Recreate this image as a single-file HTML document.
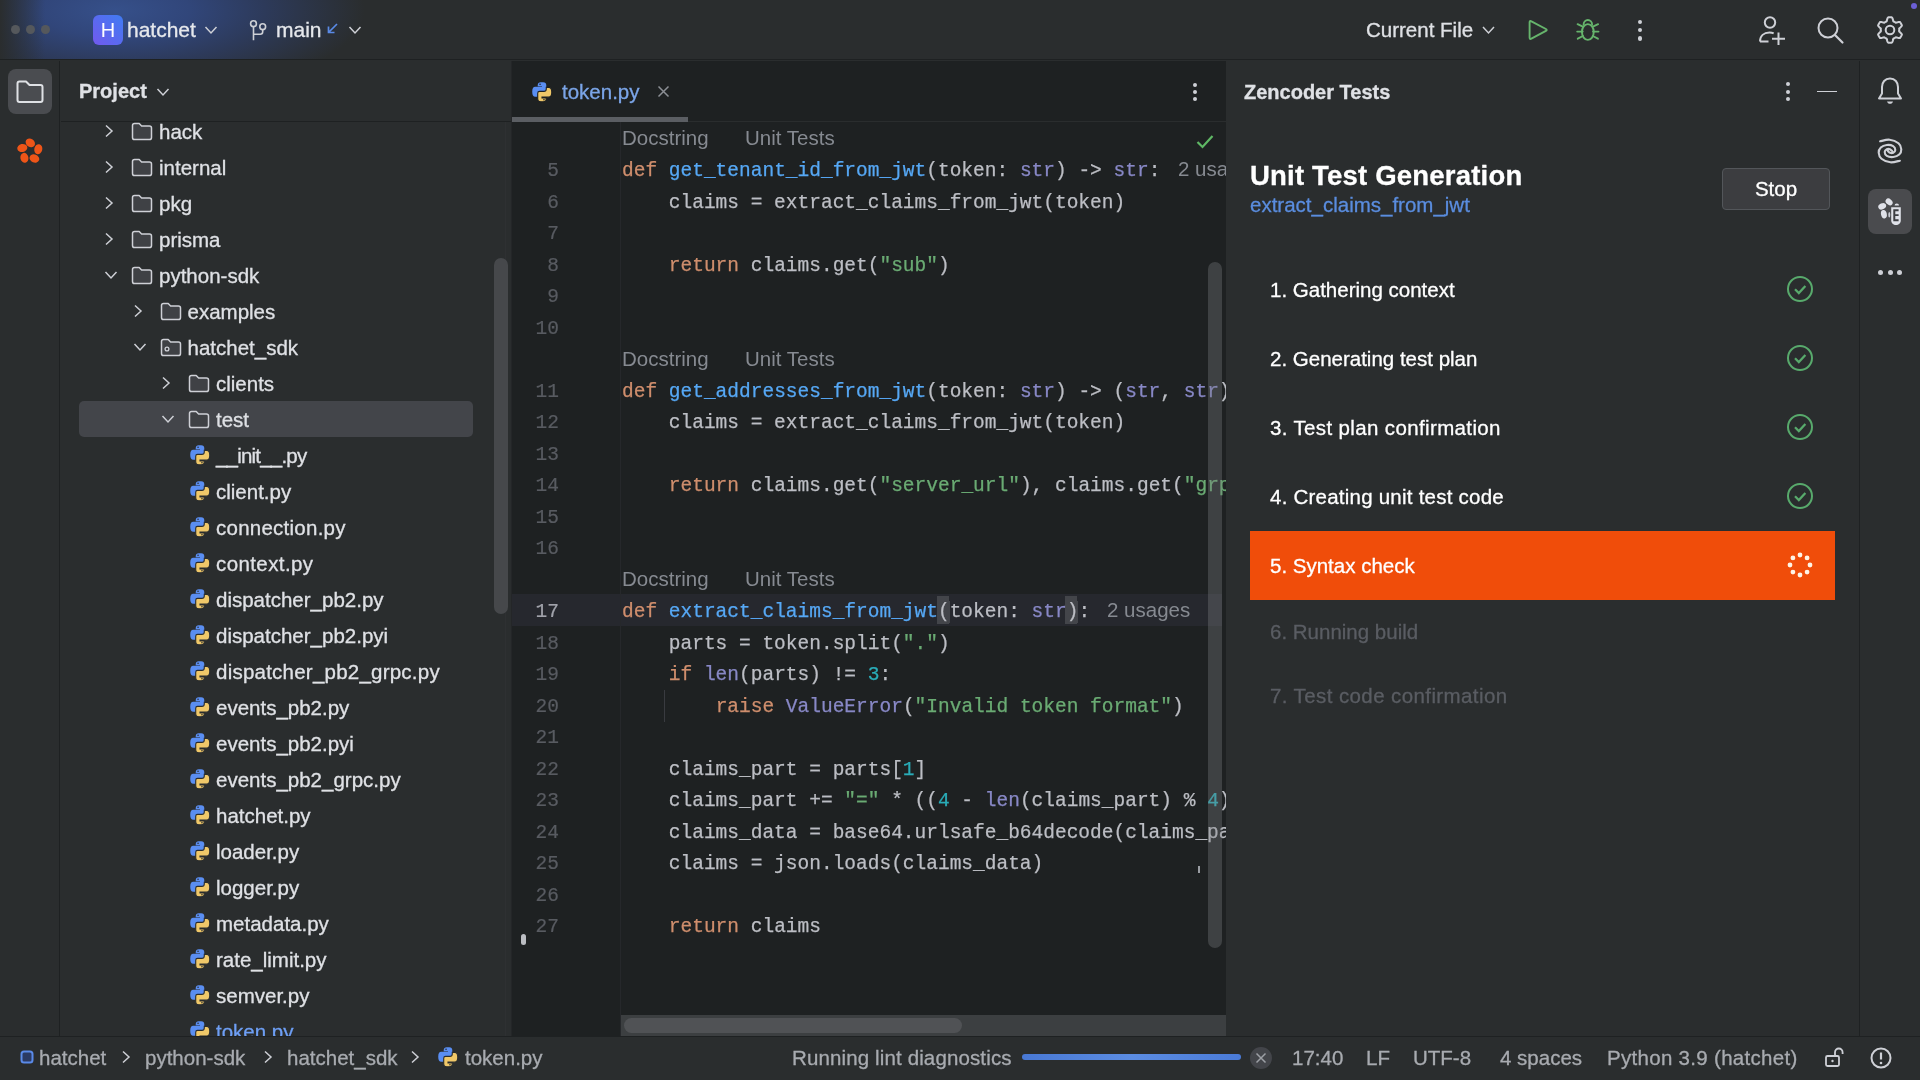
<!DOCTYPE html>
<html><head><meta charset="utf-8">
<style>
*{margin:0;padding:0;box-sizing:border-box}
html,body{width:1920px;height:1080px;overflow:hidden;background:#2a2d2e;font-family:"Liberation Sans",sans-serif;color:#dfe1e5}
.a{position:absolute}
.ui{font-size:20.5px;white-space:nowrap;line-height:24px;-webkit-text-stroke:0.3px currentColor}
#top{left:0;top:0;width:1920px;height:60px;background:linear-gradient(90deg,#2a2d2e 0px,rgba(42,45,46,0) 45px),radial-gradient(ellipse 250px 90px at 115px 10px,#36508a 0%,#31467a 30%,#2d3a5a 60%,#2a2d2e 100%);border-bottom:1px solid #1e2122}
#lstrip{left:0;top:61px;width:60px;height:975px;background:#2a2d2e;border-right:1px solid #1e2122}
#proj{left:61px;top:61px;width:451px;height:975px;background:#2a2d2e}
#editor{left:512px;top:61px;width:714px;height:975px;background:#1e2122;overflow:hidden}
#zen{left:1226px;top:61px;width:633px;height:975px;background:#2a2d2e}
#rstrip{left:1859px;top:61px;width:61px;height:975px;background:#2a2d2e;border-left:1px solid #1e2122}
#status{left:0;top:1036px;width:1920px;height:44px;background:#2a2d2e;border-top:1px solid #1e2122}
.code{font-family:"Liberation Mono",monospace;font-size:19.5px;line-height:31.5px;white-space:pre;color:#bcbec4;-webkit-text-stroke:0.25px currentColor}
.kw{color:#cf8e6d}.fn{color:#56a8f5}.bi{color:#8888c6}.st{color:#6aab73}.nu{color:#2aacb8}
.ln{font-family:"Liberation Mono",monospace;font-size:19.5px;line-height:31.5px;color:#585b61;text-align:right;width:60px;-webkit-text-stroke:0.2px currentColor}
.hint{font-family:"Liberation Sans",sans-serif;font-size:20.5px;color:#868a91}
.row{height:36px;line-height:36px}
.br{background:#43454a}
</style></head><body>
<div id="root" style="position:absolute;left:0;top:0;width:1920px;height:1080px;will-change:transform">
<svg width="0" height="0" style="position:absolute">
<defs>
<symbol id="py" viewBox="-1 -1 18 18">
<path d="M4.5 2.5Q4.5 0 7 0H9Q11.5 0 11.5 2.5V7Q11.5 8.5 10 8.5H6.5Q4.5 8.5 4.5 10.5V11.8H2.5Q0 11.8 0 7.7Q0 3.8 2.5 3.8H8V3.2H4.5Z" fill="#5a8ef2"/>
<path d="M11.5 13.5Q11.5 16 9 16H7Q4.5 16 4.5 13.5V9Q4.5 7.5 6 7.5H9.5Q11.5 7.5 11.5 5.5V4.2H13.5Q16 4.2 16 8.3Q16 12.2 13.5 12.2H8V12.8H11.5Z" fill="#f0c869" stroke="var(--bg,#2a2d2e)" stroke-width=".9"/>
<circle cx="6.4" cy="1.6" r=".65" fill="var(--bg,#2a2d2e)"/><circle cx="9.6" cy="14.4" r=".65" fill="var(--bg,#2a2d2e)"/>
</symbol>
<symbol id="fold" viewBox="0 0 22 19"><path d="M1.5 3.6Q1.5 1.5 3.6 1.5H8.2L10.6 4H18.4Q20.5 4 20.5 6.1V15.4Q20.5 17.5 18.4 17.5H3.6Q1.5 17.5 1.5 15.4Z" fill="#3f4145" stroke="#ced0d6" stroke-width="1.5" stroke-linejoin="round"/></symbol>
<symbol id="chev" viewBox="0 0 10 14"><path d="M2 1.5l6 5.5-6 5.5" fill="none" stroke="#ced0d6" stroke-width="1.5"/></symbol>
<symbol id="chevd" viewBox="0 0 14 10"><path d="M1.5 2l5.5 6 5.5-6" fill="none" stroke="#ced0d6" stroke-width="1.5"/></symbol>
<symbol id="chk" viewBox="0 0 28 28"><circle cx="14" cy="14" r="12" fill="none" stroke="#58aa6c" stroke-width="2"/><path d="M9 14.3l3.8 3.8 6.6-7.2" fill="none" stroke="#58aa6c" stroke-width="2.2"/></symbol>
</defs>
</svg>

<div id="top" class="a"></div>
<div id="lstrip" class="a"></div>
<div id="proj" class="a"></div>
<div id="editor" class="a"></div>
<div id="zen" class="a"></div>
<div id="rstrip" class="a"></div>
<div id="status" class="a"></div>


<!-- top bar content -->
<div class="a" style="left:10.5px;top:25px;width:9px;height:9px;border-radius:50%;background:#55585c"></div>
<div class="a" style="left:25.5px;top:25px;width:9px;height:9px;border-radius:50%;background:#55585c"></div>
<div class="a" style="left:40.5px;top:25px;width:9px;height:9px;border-radius:50%;background:#55585c"></div>
<div class="a" style="left:93px;top:15px;width:30px;height:30px;border-radius:6px;background:linear-gradient(45deg,#7259ee,#3f7cf2);color:#fff;font-size:20px;text-align:center;line-height:30px">H</div>
<div class="a ui" style="left:127px;top:18px;font-size:21px;color:#e6e8ec">hatchet</div>
<svg class="a" style="left:204px;top:25px" width="14" height="10"><use href="#chevd"/></svg>
<svg class="a" style="left:247px;top:19px" width="22" height="24" viewBox="0 0 22 24"><circle cx="6.5" cy="4.7" r="2.9" fill="none" stroke="#ced0d6" stroke-width="1.6"/><circle cx="15.7" cy="7.7" r="2.9" fill="none" stroke="#ced0d6" stroke-width="1.6"/><path d="M6.5 7.6V21.3M15.7 10.6V12.8Q15.7 15.3 13.2 15.3H6.5" fill="none" stroke="#ced0d6" stroke-width="1.6"/></svg>
<div class="a ui" style="left:276px;top:18px;font-size:21px;color:#e6e8ec">main</div>
<svg class="a" style="left:326px;top:22px" width="13" height="13" viewBox="0 0 13 13"><path d="M11 2L2.5 10.5M2.5 4.5v6H8.5" fill="none" stroke="#5a8ae6" stroke-width="1.7"/></svg>
<svg class="a" style="left:348px;top:25px" width="14" height="10"><use href="#chevd"/></svg>

<div class="a ui" style="left:1366px;top:18px;font-size:20.5px;color:#dfe1e5">Current File</div>
<svg class="a" style="left:1481px;top:25px" width="15" height="10" viewBox="0 0 14 10"><path d="M1.5 2l5.5 6 5.5-6" fill="none" stroke="#ced0d6" stroke-width="1.5"/></svg>
<svg class="a" style="left:1526px;top:18px" width="24" height="24" viewBox="0 0 24 24"><path d="M3.6 4.4Q3.6 2.3 5.4 3.3L19.9 11Q21.5 11.9 19.9 12.8L5.4 20.7Q3.6 21.7 3.6 19.6Z" fill="none" stroke="#66b46c" stroke-width="1.9" stroke-linejoin="round"/></svg>
<svg class="a" style="left:1575px;top:17px" width="26" height="24" viewBox="0 0 26 24"><ellipse cx="12.85" cy="15" rx="5.9" ry="7.9" fill="none" stroke="#66b46c" stroke-width="1.9"/><path d="M8.6 7.6A4.25 4.6 0 0 1 17.1 7.6M7.8 9.6L2.6 7.2M17.9 9.6L23.1 7.2M7.7 14.6H2.2M18 14.6H23.5M7.9 19L2.8 21.7M17.8 19L22.9 21.7" fill="none" stroke="#66b46c" stroke-width="1.9" stroke-linecap="round"/></svg>
<div class="a" style="left:1637.5px;top:19.5px;width:4.5px;height:4.5px;border-radius:50%;background:#ced0d6"></div>
<div class="a" style="left:1637.5px;top:27.8px;width:4.5px;height:4.5px;border-radius:50%;background:#ced0d6"></div>
<div class="a" style="left:1637.5px;top:36px;width:4.5px;height:4.5px;border-radius:50%;background:#ced0d6"></div>
<svg class="a" style="left:1757px;top:15px" width="30" height="32" viewBox="0 0 30 32"><circle cx="13" cy="7.5" r="5.2" fill="none" stroke="#ced0d6" stroke-width="2"/><path d="M3 26.5c0-5.5 3.8-9 9.5-9 1.6 0 3 .3 4.2.9M3 26.5h8.5M21.5 17.5v12.5M15 23.8h13" fill="none" stroke="#ced0d6" stroke-width="2"/></svg>
<svg class="a" style="left:1816px;top:16px" width="30" height="30" viewBox="0 0 30 30"><circle cx="12" cy="12" r="9.5" fill="none" stroke="#ced0d6" stroke-width="2"/><path d="M19 19l7.5 7.5" fill="none" stroke="#ced0d6" stroke-width="2.2" stroke-linecap="round"/></svg>
<svg class="a" style="left:1875px;top:14.5px" width="30" height="30" viewBox="0 0 30 30"><path d="M24.25 15.00 L24.25 15.24 L24.24 15.48 L24.22 15.73 L24.20 15.97 L24.17 16.21 L24.14 16.45 L24.49 16.76 L24.86 17.10 L25.24 17.46 L25.63 17.85 L25.99 18.26 L26.34 18.68 L26.64 19.12 L26.90 19.57 L26.78 19.88 L26.65 20.19 L26.51 20.49 L26.36 20.79 L26.20 21.08 L26.04 21.38 L25.87 21.66 L25.69 21.94 L25.51 22.22 L25.31 22.49 L25.12 22.76 L24.91 23.02 L24.39 23.02 L23.86 22.98 L23.32 22.89 L22.78 22.78 L22.25 22.64 L21.75 22.49 L21.27 22.34 L20.82 22.19 L20.63 22.34 L20.44 22.48 L20.24 22.62 L20.04 22.76 L19.83 22.89 L19.62 23.01 L19.41 23.13 L19.20 23.24 L18.98 23.35 L18.76 23.45 L18.54 23.55 L18.32 23.64 L18.22 24.10 L18.12 24.59 L17.99 25.10 L17.85 25.63 L17.68 26.15 L17.48 26.66 L17.25 27.14 L16.99 27.59 L16.66 27.64 L16.33 27.68 L16.00 27.71 L15.67 27.73 L15.33 27.75 L15.00 27.75 L14.67 27.75 L14.33 27.73 L14.00 27.71 L13.67 27.68 L13.34 27.64 L13.01 27.59 L12.75 27.14 L12.52 26.66 L12.32 26.15 L12.15 25.63 L12.01 25.10 L11.88 24.59 L11.78 24.10 L11.68 23.64 L11.46 23.55 L11.24 23.45 L11.02 23.35 L10.80 23.24 L10.59 23.13 L10.38 23.01 L10.17 22.89 L9.96 22.76 L9.76 22.62 L9.56 22.48 L9.37 22.34 L9.18 22.19 L8.73 22.34 L8.25 22.49 L7.75 22.64 L7.22 22.78 L6.68 22.89 L6.14 22.98 L5.61 23.02 L5.09 23.02 L4.88 22.76 L4.69 22.49 L4.49 22.22 L4.31 21.94 L4.13 21.66 L3.96 21.38 L3.80 21.08 L3.64 20.79 L3.49 20.49 L3.35 20.19 L3.22 19.88 L3.10 19.57 L3.36 19.12 L3.66 18.68 L4.01 18.26 L4.37 17.85 L4.76 17.46 L5.14 17.10 L5.51 16.76 L5.86 16.45 L5.83 16.21 L5.80 15.97 L5.78 15.73 L5.76 15.48 L5.75 15.24 L5.75 15.00 L5.75 14.76 L5.76 14.52 L5.78 14.27 L5.80 14.03 L5.83 13.79 L5.86 13.55 L5.51 13.24 L5.14 12.90 L4.76 12.54 L4.37 12.15 L4.01 11.74 L3.66 11.32 L3.36 10.88 L3.10 10.43 L3.22 10.12 L3.35 9.81 L3.49 9.51 L3.64 9.21 L3.80 8.92 L3.96 8.63 L4.13 8.34 L4.31 8.06 L4.49 7.78 L4.69 7.51 L4.88 7.24 L5.09 6.98 L5.61 6.98 L6.14 7.02 L6.68 7.11 L7.22 7.22 L7.75 7.36 L8.25 7.51 L8.73 7.66 L9.18 7.81 L9.37 7.66 L9.56 7.52 L9.76 7.38 L9.96 7.24 L10.17 7.11 L10.37 6.99 L10.59 6.87 L10.80 6.76 L11.02 6.65 L11.24 6.55 L11.46 6.45 L11.68 6.36 L11.78 5.90 L11.88 5.41 L12.01 4.90 L12.15 4.37 L12.32 3.85 L12.52 3.34 L12.75 2.86 L13.01 2.41 L13.34 2.36 L13.67 2.32 L14.00 2.29 L14.33 2.27 L14.67 2.25 L15.00 2.25 L15.33 2.25 L15.67 2.27 L16.00 2.29 L16.33 2.32 L16.66 2.36 L16.99 2.41 L17.25 2.86 L17.48 3.34 L17.68 3.85 L17.85 4.37 L17.99 4.90 L18.12 5.41 L18.22 5.90 L18.32 6.36 L18.54 6.45 L18.76 6.55 L18.98 6.65 L19.20 6.76 L19.41 6.87 L19.62 6.99 L19.83 7.11 L20.04 7.24 L20.24 7.38 L20.44 7.52 L20.63 7.66 L20.82 7.81 L21.27 7.66 L21.75 7.51 L22.25 7.36 L22.78 7.22 L23.32 7.11 L23.86 7.02 L24.39 6.98 L24.91 6.98 L25.12 7.24 L25.31 7.51 L25.51 7.78 L25.69 8.06 L25.87 8.34 L26.04 8.63 L26.20 8.92 L26.36 9.21 L26.51 9.51 L26.65 9.81 L26.78 10.12 L26.90 10.43 L26.64 10.88 L26.34 11.32 L25.99 11.74 L25.63 12.15 L25.24 12.54 L24.86 12.90 L24.49 13.24 L24.14 13.55 L24.17 13.79 L24.20 14.03 L24.22 14.27 L24.24 14.52 L24.25 14.76Z" fill="none" stroke="#ced0d6" stroke-width="2" stroke-linejoin="round"/><circle cx="15" cy="15" r="4.3" fill="none" stroke="#ced0d6" stroke-width="2"/></svg>
<div class="a" style="left:1911px;top:3px;width:6px;height:6px;border-radius:50%;background:#6b5fd6"></div>


<!-- left strip -->
<div class="a" style="left:8px;top:69px;width:44px;height:45px;border-radius:8px;background:#4a4c50"></div>
<svg class="a" style="left:16px;top:80px" width="28" height="24" viewBox="0 0 28 24"><path d="M1.5 3.5c0-1.1.9-2 2-2h6.5l3.5 3.5h11c1.1 0 2 .9 2 2v13c0 1.1-.9 2-2 2h-21c-1.1 0-2-.9-2-2z" fill="none" stroke="#dfe1e5" stroke-width="2" stroke-linejoin="round"/></svg>
<svg class="a" style="left:16px;top:136px" width="28" height="28" viewBox="0 0 28 28">
<ellipse cx="14.3" cy="6.9" rx="5" ry="4" transform="rotate(35 14.3 6.9)" fill="#ee5518"/>
<ellipse cx="22.3" cy="13.2" rx="4" ry="5.1" transform="rotate(12 22.3 13.2)" fill="#ee5518"/>
<ellipse cx="18.4" cy="22.5" rx="5" ry="4" transform="rotate(22 18.4 22.5)" fill="#ee5518"/>
<ellipse cx="8.4" cy="21.8" rx="4" ry="5" transform="rotate(-12 8.4 21.8)" fill="#ee5518"/>
<ellipse cx="6.3" cy="12" rx="5.1" ry="4" transform="rotate(-12 6.3 12)" fill="#ee5518"/>
</svg>

<!-- project header -->
<div class="a ui" style="left:79px;top:79px;font-weight:bold;font-size:20px;color:#dfe1e5">Project</div>
<svg class="a" style="left:156px;top:87px" width="14" height="10"><use href="#chevd"/></svg>
<div class="a" style="left:61px;top:121px;width:451px;height:1px;background:#1e2122"></div>
<div class="a" style="left:505px;top:122px;width:1px;height:914px;background:#2e3032"></div><div class="a" style="left:511px;top:61px;width:1px;height:975px;background:#242628"></div>
<!-- tree selection -->
<div class="a" style="left:79px;top:401px;width:394px;height:36px;border-radius:5px;background:#43454a"></div>
<!-- tree scrollbar -->
<div class="a" style="left:494px;top:258px;width:14px;height:356px;border-radius:7px;background:#46484b"></div>
<div class="a" style="left:61px;top:122px;width:447px;height:914px;overflow:hidden"><div class="a" style="left:-61px;top:-122px;width:1000px;height:1200px">
<svg class="a" style="left:104.0px;top:124px" width="10" height="14"><use href="#chev"/></svg>
<svg class="a" style="left:131.0px;top:121.5px" width="22" height="19"><use href="#fold"/></svg>
<div class="a ui" style="left:159.0px;top:119.5px">hack</div>
<svg class="a" style="left:104.0px;top:160px" width="10" height="14"><use href="#chev"/></svg>
<svg class="a" style="left:131.0px;top:157.5px" width="22" height="19"><use href="#fold"/></svg>
<div class="a ui" style="left:159.0px;top:155.5px">internal</div>
<svg class="a" style="left:104.0px;top:196px" width="10" height="14"><use href="#chev"/></svg>
<svg class="a" style="left:131.0px;top:193.5px" width="22" height="19"><use href="#fold"/></svg>
<div class="a ui" style="left:159.0px;top:191.5px">pkg</div>
<svg class="a" style="left:104.0px;top:232px" width="10" height="14"><use href="#chev"/></svg>
<svg class="a" style="left:131.0px;top:229.5px" width="22" height="19"><use href="#fold"/></svg>
<div class="a ui" style="left:159.0px;top:227.5px">prisma</div>
<svg class="a" style="left:104.0px;top:270px" width="14" height="10"><use href="#chevd"/></svg>
<svg class="a" style="left:131.0px;top:265.5px" width="22" height="19"><use href="#fold"/></svg>
<div class="a ui" style="left:159.0px;top:263.5px">python-sdk</div>
<svg class="a" style="left:132.5px;top:304px" width="10" height="14"><use href="#chev"/></svg>
<svg class="a" style="left:159.5px;top:301.5px" width="22" height="19"><use href="#fold"/></svg>
<div class="a ui" style="left:187.5px;top:299.5px">examples</div>
<svg class="a" style="left:132.5px;top:342px" width="14" height="10"><use href="#chevd"/></svg>
<svg class="a" style="left:159.5px;top:337.5px" width="22" height="19" viewBox="0 0 22 19"><use href="#fold"/><circle cx="7" cy="11" r="1.9" fill="none" stroke="#ced0d6" stroke-width="1.3"/></svg>
<div class="a ui" style="left:187.5px;top:335.5px">hatchet_sdk</div>
<svg class="a" style="left:161.0px;top:376px" width="10" height="14"><use href="#chev"/></svg>
<svg class="a" style="left:188.0px;top:373.5px" width="22" height="19"><use href="#fold"/></svg>
<div class="a ui" style="left:216.0px;top:371.5px">clients</div>
<svg class="a" style="left:161.0px;top:414px" width="14" height="10"><use href="#chevd"/></svg>
<svg class="a" style="left:188.0px;top:409.5px" width="22" height="19"><use href="#fold"/></svg>
<div class="a ui" style="left:216.0px;top:407.5px">test</div>
<svg class="a" style="left:188.5px;top:444px" width="22" height="22"><use href="#py"/></svg>
<div class="a ui" style="left:216px;top:443.5px;color:#dfe1e5;letter-spacing:-0.8px">__init__.py</div>
<svg class="a" style="left:188.5px;top:480px" width="22" height="22"><use href="#py"/></svg>
<div class="a ui" style="left:216px;top:479.5px;color:#dfe1e5">client.py</div>
<svg class="a" style="left:188.5px;top:516px" width="22" height="22"><use href="#py"/></svg>
<div class="a ui" style="left:216px;top:515.5px;color:#dfe1e5;letter-spacing:0.25px">connection.py</div>
<svg class="a" style="left:188.5px;top:552px" width="22" height="22"><use href="#py"/></svg>
<div class="a ui" style="left:216px;top:551.5px;color:#dfe1e5;letter-spacing:0.4px">context.py</div>
<svg class="a" style="left:188.5px;top:588px" width="22" height="22"><use href="#py"/></svg>
<div class="a ui" style="left:216px;top:587.5px;color:#dfe1e5">dispatcher_pb2.py</div>
<svg class="a" style="left:188.5px;top:624px" width="22" height="22"><use href="#py"/></svg>
<div class="a ui" style="left:216px;top:623.5px;color:#dfe1e5">dispatcher_pb2.pyi</div>
<svg class="a" style="left:188.5px;top:660px" width="22" height="22"><use href="#py"/></svg>
<div class="a ui" style="left:216px;top:659.5px;color:#dfe1e5;letter-spacing:0.23px">dispatcher_pb2_grpc.py</div>
<svg class="a" style="left:188.5px;top:696px" width="22" height="22"><use href="#py"/></svg>
<div class="a ui" style="left:216px;top:695.5px;color:#dfe1e5">events_pb2.py</div>
<svg class="a" style="left:188.5px;top:732px" width="22" height="22"><use href="#py"/></svg>
<div class="a ui" style="left:216px;top:731.5px;color:#dfe1e5">events_pb2.pyi</div>
<svg class="a" style="left:188.5px;top:768px" width="22" height="22"><use href="#py"/></svg>
<div class="a ui" style="left:216px;top:767.5px;color:#dfe1e5">events_pb2_grpc.py</div>
<svg class="a" style="left:188.5px;top:804px" width="22" height="22"><use href="#py"/></svg>
<div class="a ui" style="left:216px;top:803.5px;color:#dfe1e5">hatchet.py</div>
<svg class="a" style="left:188.5px;top:840px" width="22" height="22"><use href="#py"/></svg>
<div class="a ui" style="left:216px;top:839.5px;color:#dfe1e5">loader.py</div>
<svg class="a" style="left:188.5px;top:876px" width="22" height="22"><use href="#py"/></svg>
<div class="a ui" style="left:216px;top:875.5px;color:#dfe1e5">logger.py</div>
<svg class="a" style="left:188.5px;top:912px" width="22" height="22"><use href="#py"/></svg>
<div class="a ui" style="left:216px;top:911.5px;color:#dfe1e5">metadata.py</div>
<svg class="a" style="left:188.5px;top:948px" width="22" height="22"><use href="#py"/></svg>
<div class="a ui" style="left:216px;top:947.5px;color:#dfe1e5">rate_limit.py</div>
<svg class="a" style="left:188.5px;top:984px" width="22" height="22"><use href="#py"/></svg>
<div class="a ui" style="left:216px;top:983.5px;color:#dfe1e5">semver.py</div>
<svg class="a" style="left:188.5px;top:1020px" width="22" height="22"><use href="#py"/></svg>
<div class="a ui" style="left:216px;top:1019.5px;color:#6e9ff5">token.py</div>
</div></div>


<!-- editor -->
<div class="a" style="left:512px;top:61px;width:714px;height:975px;overflow:hidden">
<div class="a" style="left:-512px;top:-61px;width:1920px;height:1080px">
<div class="a" style="left:512px;top:594px;width:710px;height:32px;background:#26282e"></div>
<div class="a" style="left:937px;top:596px;width:12px;height:28px;background:#43454a"></div>
<div class="a" style="left:1065px;top:596px;width:12px;height:28px;background:#43454a"></div>
<div class="a" style="left:620px;top:122px;width:1px;height:914px;background:#26282b"></div>
<div class="a" style="left:664px;top:690px;width:1px;height:32px;background:#393b40"></div>
<div class="a hint" style="left:622px;top:122.25px;line-height:31.5px">Docstring</div><div class="a hint" style="left:745px;top:122.25px;line-height:31.5px">Unit Tests</div>
<div class="a ln" style="left:499px;top:156.25px;color:#585b61">5</div>
<div class="a code" style="left:622px;top:156.25px"><span class="kw">def</span> <span class="fn">get_tenant_id_from_jwt</span>(token: <span class="bi">str</span>) -&gt; <span class="bi">str</span>:</div>
<div class="a ln" style="left:499px;top:187.75px;color:#585b61">6</div>
<div class="a code" style="left:622px;top:187.75px">    claims = extract_claims_from_jwt(token)</div>
<div class="a ln" style="left:499px;top:219.25px;color:#585b61">7</div>
<div class="a ln" style="left:499px;top:250.75px;color:#585b61">8</div>
<div class="a code" style="left:622px;top:250.75px">    <span class="kw">return</span> claims.get(<span class="st">"sub"</span>)</div>
<div class="a ln" style="left:499px;top:282.25px;color:#585b61">9</div>
<div class="a ln" style="left:499px;top:313.75px;color:#585b61">10</div>
<div class="a hint" style="left:622px;top:342.75px;line-height:31.5px">Docstring</div><div class="a hint" style="left:745px;top:342.75px;line-height:31.5px">Unit Tests</div>
<div class="a ln" style="left:499px;top:376.75px;color:#585b61">11</div>
<div class="a code" style="left:622px;top:376.75px"><span class="kw">def</span> <span class="fn">get_addresses_from_jwt</span>(token: <span class="bi">str</span>) -&gt; (<span class="bi">str</span>, <span class="bi">str</span>)</div>
<div class="a ln" style="left:499px;top:408.25px;color:#585b61">12</div>
<div class="a code" style="left:622px;top:408.25px">    claims = extract_claims_from_jwt(token)</div>
<div class="a ln" style="left:499px;top:439.75px;color:#585b61">13</div>
<div class="a ln" style="left:499px;top:471.25px;color:#585b61">14</div>
<div class="a code" style="left:622px;top:471.25px">    <span class="kw">return</span> claims.get(<span class="st">"server_url"</span>), claims.get(<span class="st">"grpc_broadcast_address"</span>)</div>
<div class="a ln" style="left:499px;top:502.75px;color:#585b61">15</div>
<div class="a ln" style="left:499px;top:534.25px;color:#585b61">16</div>
<div class="a hint" style="left:622px;top:563.25px;line-height:31.5px">Docstring</div><div class="a hint" style="left:745px;top:563.25px;line-height:31.5px">Unit Tests</div>
<div class="a ln" style="left:499px;top:597.25px;color:#a1a3ab">17</div>
<div class="a code" style="left:622px;top:597.25px"><span class="kw">def</span> <span class="fn">extract_claims_from_jwt</span><span class="br">(</span>token: <span class="bi">str</span><span class="br">)</span>:</div>
<div class="a ln" style="left:499px;top:628.75px;color:#585b61">18</div>
<div class="a code" style="left:622px;top:628.75px">    parts = token.split(<span class="st">"."</span>)</div>
<div class="a ln" style="left:499px;top:660.25px;color:#585b61">19</div>
<div class="a code" style="left:622px;top:660.25px">    <span class="kw">if</span> <span class="bi">len</span>(parts) != <span class="nu">3</span>:</div>
<div class="a ln" style="left:499px;top:691.75px;color:#585b61">20</div>
<div class="a code" style="left:622px;top:691.75px">        <span class="kw">raise</span> <span class="bi">ValueError</span>(<span class="st">"Invalid token format"</span>)</div>
<div class="a ln" style="left:499px;top:723.25px;color:#585b61">21</div>
<div class="a ln" style="left:499px;top:754.75px;color:#585b61">22</div>
<div class="a code" style="left:622px;top:754.75px">    claims_part = parts[<span class="nu">1</span>]</div>
<div class="a ln" style="left:499px;top:786.25px;color:#585b61">23</div>
<div class="a code" style="left:622px;top:786.25px">    claims_part += <span class="st">"="</span> * ((<span class="nu">4</span> - <span class="bi">len</span>(claims_part) % <span class="nu">4</span>)</div>
<div class="a ln" style="left:499px;top:817.75px;color:#585b61">24</div>
<div class="a code" style="left:622px;top:817.75px">    claims_data = base64.urlsafe_b64decode(claims_part)</div>
<div class="a ln" style="left:499px;top:849.25px;color:#585b61">25</div>
<div class="a code" style="left:622px;top:849.25px">    claims = json.loads(claims_data)</div>
<div class="a ln" style="left:499px;top:880.75px;color:#585b61">26</div>
<div class="a ln" style="left:499px;top:912.25px;color:#585b61">27</div>
<div class="a code" style="left:622px;top:912.25px">    <span class="kw">return</span> claims</div>

<div class="a hint" style="left:1178px;top:153.25px;line-height:31.5px">2 usages</div>
<div class="a hint" style="left:1107px;top:594.25px;line-height:31.5px">2 usages</div>
</div></div>
<!-- tab -->
<svg class="a" style="left:531px;top:81px;--bg:#1e2122" width="22" height="22"><use href="#py"/></svg>
<div class="a ui" style="left:562px;top:80px;color:#7ba5e8">token.py</div>
<svg class="a" style="left:657px;top:85px" width="13" height="13" viewBox="0 0 13 13"><path d="M1.5 1.5l10 10M11.5 1.5l-10 10" stroke="#8c8f95" stroke-width="1.5"/></svg>
<div class="a" style="left:512px;top:117px;width:176px;height:5px;background:#5b5e63"></div>
<div class="a" style="left:688px;top:121px;width:538px;height:1px;background:#2a2d2e"></div>
<div class="a" style="left:1193px;top:83px;width:4px;height:4px;border-radius:50%;background:#ced0d6"></div>
<div class="a" style="left:1193px;top:90px;width:4px;height:4px;border-radius:50%;background:#ced0d6"></div>
<div class="a" style="left:1193px;top:97px;width:4px;height:4px;border-radius:50%;background:#ced0d6"></div>
<svg class="a" style="left:1196px;top:134px" width="18" height="16" viewBox="0 0 18 16"><path d="M1.5 8l5 5 10-11" fill="none" stroke="#5fb865" stroke-width="2.2"/></svg>
<!-- editor scrollbars -->
<div class="a" style="left:1208px;top:262px;width:14px;height:686px;border-radius:7px;background:rgba(125,128,133,0.34)"></div>
<div class="a" style="left:621px;top:1015px;width:605px;height:21px;background:#3c3f41"></div>
<div class="a" style="left:624px;top:1018px;width:338px;height:15px;border-radius:7.5px;background:#505255"></div>
<div class="a" style="left:1198px;top:866px;width:2px;height:7px;background:#9a9da3"></div>
<div class="a" style="left:521px;top:934px;width:5px;height:11px;border-radius:3px;background:#bbbdc2"></div>


<!-- zencoder panel -->
<div class="a ui" style="left:1244px;top:80px;font-weight:bold;font-size:20px;color:#dfe1e5">Zencoder Tests</div>
<div class="a" style="left:1786px;top:82px;width:4px;height:4px;border-radius:50%;background:#ced0d6"></div>
<div class="a" style="left:1786px;top:89.5px;width:4px;height:4px;border-radius:50%;background:#ced0d6"></div>
<div class="a" style="left:1786px;top:97px;width:4px;height:4px;border-radius:50%;background:#ced0d6"></div>
<div class="a" style="left:1817px;top:90.5px;width:20px;height:1.6px;background:#ced0d6"></div>
<div class="a ui" style="left:1250px;top:159px;font-weight:bold;font-size:27.5px;line-height:34px;color:#ffffff;letter-spacing:0.2px">Unit Test Generation</div>
<div class="a ui" style="left:1250px;top:193px;font-size:20.5px;color:#5a8ddf">extract_claims_from_jwt</div>
<div class="a" style="left:1722px;top:168px;width:108px;height:42px;border-radius:4px;background:#3c3d40;border:1px solid #53565a"></div>
<div class="a ui" style="left:1722px;top:177px;width:108px;text-align:center;font-size:20.5px;color:#ffffff">Stop</div>
<div class="a" style="left:1250px;top:531px;width:585px;height:69px;background:#f04d0a"></div>
<div class="a ui" style="left:1270px;top:278px;font-size:20.5px;color:#ffffff">1. Gathering context</div>
<svg class="a" style="left:1786px;top:275px" width="28" height="28"><use href="#chk"/></svg>
<div class="a ui" style="left:1270px;top:347px;font-size:20.5px;color:#ffffff">2. Generating test plan</div>
<svg class="a" style="left:1786px;top:344px" width="28" height="28"><use href="#chk"/></svg>
<div class="a ui" style="left:1270px;top:416px;font-size:20.5px;color:#ffffff;letter-spacing:0.36px">3. Test plan confirmation</div>
<svg class="a" style="left:1786px;top:413px" width="28" height="28"><use href="#chk"/></svg>
<div class="a ui" style="left:1270px;top:485px;font-size:20.5px;color:#ffffff;letter-spacing:0.23px">4. Creating unit test code</div>
<svg class="a" style="left:1786px;top:482px" width="28" height="28"><use href="#chk"/></svg>
<div class="a ui" style="left:1270px;top:554px;font-size:20.5px;color:#ffffff">5. Syntax check</div>
<svg class="a" style="left:1786px;top:551px" width="28" height="28"><circle cx="24.00" cy="14.00" r="2.4" fill="#fff4e6"/><circle cx="21.07" cy="21.07" r="2.4" fill="#fff4e6"/><circle cx="14.00" cy="24.00" r="2.4" fill="#fff4e6"/><circle cx="6.93" cy="21.07" r="2.4" fill="#fff4e6"/><circle cx="4.00" cy="14.00" r="2.4" fill="#fff4e6"/><circle cx="6.93" cy="6.93" r="2.4" fill="#fff4e6"/><circle cx="14.00" cy="4.00" r="2.4" fill="#fff4e6"/><circle cx="21.07" cy="6.93" r="2.4" fill="#fff4e6"/></svg>
<div class="a ui" style="left:1270px;top:620px;font-size:20.5px;color:#5a5d63">6. Running build</div>
<div class="a ui" style="left:1270px;top:684px;font-size:20.5px;color:#5a5d63;letter-spacing:0.4px">7. Test code confirmation</div>

<!-- right strip -->
<svg class="a" style="left:1876px;top:76px" width="28" height="30" viewBox="0 0 28 30"><path d="M14 2.5c-5 0-8 3.8-8 8.5v6.5L3 22.5h22l-3-5V11c0-4.7-3-8.5-8-8.5z" fill="none" stroke="#ced0d6" stroke-width="2" stroke-linejoin="round"/><path d="M11 25.5c.5 1.5 1.5 2.3 3 2.3s2.5-.8 3-2.3z" fill="#ced0d6"/></svg>
<svg class="a" style="left:1875.7px;top:137.4px" width="28" height="28" viewBox="0 0 28 28"><path d="M4.10 4.30C5.68 4.03 10.53 2.37 13.60 2.70C16.67 3.03 20.55 4.72 22.50 6.30C24.45 7.88 25.18 10.33 25.30 12.20C25.42 14.07 24.55 16.20 23.20 17.50C21.85 18.80 19.27 19.77 17.20 20.00C15.13 20.23 12.22 19.72 10.80 18.90C9.38 18.08 8.70 16.22 8.70 15.10C8.70 13.98 9.92 12.68 10.80 12.20C11.68 11.72 13.08 11.87 14.00 12.20C14.92 12.53 15.92 13.87 16.30 14.20M23.90 23.70C22.32 23.97 17.47 25.63 14.40 25.30C11.33 24.97 7.45 23.28 5.50 21.70C3.55 20.12 2.82 17.67 2.70 15.80C2.58 13.93 3.45 11.80 4.80 10.50C6.15 9.20 8.73 8.23 10.80 8.00C12.87 7.77 15.78 8.28 17.20 9.10C18.62 9.92 19.30 11.78 19.30 12.90C19.30 14.02 18.08 15.32 17.20 15.80C16.32 16.28 14.92 16.13 14.00 15.80C13.08 15.47 12.08 14.13 11.70 13.80" fill="none" stroke="#ced0d6" stroke-width="2.1" stroke-linecap="round"/></svg>
<div class="a" style="left:1868px;top:189px;width:44px;height:45px;border-radius:8px;background:#4a4b4e"></div>
<svg class="a" style="left:1877px;top:197px" width="26" height="30" viewBox="0 0 26 30">
<ellipse cx="12.1" cy="4.9" rx="3.9" ry="2.9" transform="rotate(40 12.1 4.9)" fill="#dfe1e8"/>
<ellipse cx="5.2" cy="9.3" rx="4.1" ry="3" transform="rotate(-25 5.2 9.3)" fill="#dfe1e8"/>
<ellipse cx="6.9" cy="17.2" rx="2.9" ry="4.3" transform="rotate(-12 6.9 17.2)" fill="#dfe1e8"/>
<path d="M17.6 8.6a2.2 2 0 0 1 4.4 0z" fill="#dfe1e8"/>
<ellipse cx="12.3" cy="17.8" rx="1" ry="2.8" fill="#c9ccd4"/>
<path d="M14.2 10.2h9.6v13.3c0 2.6-2.1 4.5-4.8 4.5s-4.8-1.9-4.8-4.5z" fill="#dfe1e8"/>
<path d="M16.3 12.3h5.3v1.9h-3.3v3.1h3.3v1.8h-3.3v3.2h3.3v1.9h-5.3z" fill="#3d3e42"/>
</svg>
<div class="a" style="left:1877.5px;top:269.5px;width:5px;height:5px;border-radius:50%;background:#ced0d6"></div>
<div class="a" style="left:1887.5px;top:269.5px;width:5px;height:5px;border-radius:50%;background:#ced0d6"></div>
<div class="a" style="left:1897px;top:269.5px;width:5px;height:5px;border-radius:50%;background:#ced0d6"></div>

<!-- status bar -->
<svg class="a" style="left:20px;top:1050px" width="14" height="14" viewBox="0 0 14 14"><rect x="1.5" y="1.5" width="11" height="11" rx="2.5" fill="#2b3a63" stroke="#5a8ae8" stroke-width="2"/></svg>
<div class="a ui" style="left:39px;top:1046px;color:#a8abb0">hatchet</div>
<svg class="a" style="left:121px;top:1050px" width="10" height="14"><use href="#chev"/></svg>
<div class="a ui" style="left:145px;top:1046px;color:#a8abb0">python-sdk</div>
<svg class="a" style="left:263px;top:1050px" width="10" height="14"><use href="#chev"/></svg>
<div class="a ui" style="left:287px;top:1046px;color:#a8abb0">hatchet_sdk</div>
<svg class="a" style="left:410px;top:1050px" width="10" height="14"><use href="#chev"/></svg>
<svg class="a" style="left:437px;top:1046px" width="22" height="22"><use href="#py"/></svg>
<div class="a ui" style="left:465px;top:1046px;color:#a8abb0">token.py</div>
<div class="a ui" style="left:792px;top:1046px;color:#a8abb0;letter-spacing:0.13px">Running lint diagnostics</div>
<div class="a" style="left:1022px;top:1054px;width:219px;height:6px;border-radius:3px;background:linear-gradient(90deg,#4878d4,#5b8ce2 50%,#4a7bd8)"></div>
<div class="a" style="left:1250px;top:1047px;width:22px;height:22px;border-radius:50%;background:#43454a"></div>
<svg class="a" style="left:1255px;top:1052px" width="12" height="12" viewBox="0 0 12 12"><path d="M1.5 1.5l9 9M10.5 1.5l-9 9" stroke="#9da0a6" stroke-width="1.5"/></svg>
<div class="a ui" style="left:1292px;top:1046px;color:#a8abb0">17:40</div>
<div class="a ui" style="left:1366px;top:1046px;color:#a8abb0">LF</div>
<div class="a ui" style="left:1413px;top:1046px;color:#a8abb0">UTF-8</div>
<div class="a ui" style="left:1500px;top:1046px;color:#a8abb0">4 spaces</div>
<div class="a ui" style="left:1607px;top:1046px;color:#a8abb0;letter-spacing:0.3px">Python 3.9 (hatchet)</div>
<svg class="a" style="left:1824px;top:1046px" width="22" height="22" viewBox="0 0 22 22"><rect x="2" y="10" width="13" height="10" rx="1.5" fill="none" stroke="#ced0d6" stroke-width="1.8"/><path d="M11 10V6.5c0-2.2 1.6-4 3.8-4s3.8 1.8 3.8 4V8" fill="none" stroke="#ced0d6" stroke-width="1.8"/><circle cx="8.5" cy="15" r="1.2" fill="#ced0d6"/></svg>
<svg class="a" style="left:1869px;top:1046px" width="24" height="24" viewBox="0 0 24 24"><circle cx="12" cy="12" r="9.5" fill="none" stroke="#ced0d6" stroke-width="2"/><path d="M12 6.5v7" stroke="#ced0d6" stroke-width="2.2"/><circle cx="12" cy="17" r="1.3" fill="#ced0d6"/></svg>

</div>
</body></html>
